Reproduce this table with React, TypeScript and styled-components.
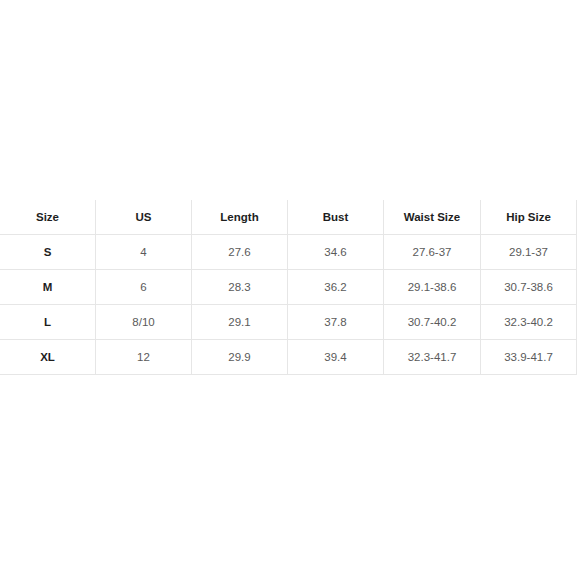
import React from "react";
import styled, { createGlobalStyle } from "styled-components";

const GlobalStyle = createGlobalStyle`
  body {
    margin: 0;
    background: #ffffff;
    font-family: "Liberation Sans", Arial, sans-serif;
  }
`;

const Page = styled.div`
  width: 580px;
  height: 580px;
  padding-top: 200px;
  box-sizing: border-box;
`;

const Table = styled.div`
  display: grid;
  grid-template-columns: 96px 96px 96px 96px 97px 96px;
`;

const Cell = styled.div<{ $head?: boolean; $bold?: boolean }>`
  height: 35px;
  box-sizing: border-box;
  border-right: 1px solid #e6e6e6;
  border-bottom: 1px solid #e6e6e6;
  display: flex;
  align-items: center;
  justify-content: center;
  font-size: 11.5px;
  font-weight: ${(p) => (p.$head || p.$bold ? 700 : 400)};
  color: ${(p) => (p.$head || p.$bold ? "#1e1e1e" : "#5a5a5a")};
`;

const headers = ["Size", "US", "Length", "Bust", "Waist Size", "Hip Size"];

const rows = [
  ["S", "4", "27.6", "34.6", "27.6-37", "29.1-37"],
  ["M", "6", "28.3", "36.2", "29.1-38.6", "30.7-38.6"],
  ["L", "8/10", "29.1", "37.8", "30.7-40.2", "32.3-40.2"],
  ["XL", "12", "29.9", "39.4", "32.3-41.7", "33.9-41.7"],
];

const App = () => {
  return (
    <Page>
      <GlobalStyle />
      <Table>
        {headers.map((h) => (
          <Cell key={h} $head>
            {h}
          </Cell>
        ))}
        {rows.map((row) =>
          row.map((v, i) => (
            <Cell key={row[0] + i} $bold={i === 0}>
              {v}
            </Cell>
          ))
        )}
      </Table>
    </Page>
  );
};

export default App;
